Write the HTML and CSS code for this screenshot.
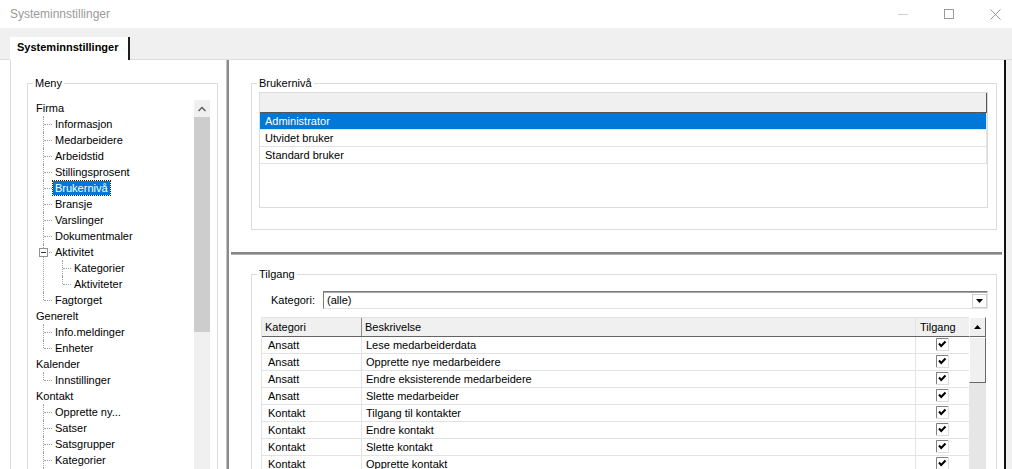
FILE: index.html
```html
<!DOCTYPE html>
<html lang="no">
<head>
    <meta charset="UTF-8">
    <title>Systeminnstillinger</title>
    <link rel="stylesheet" href="styles.css">
</head>
<body>
    <div class="titlebar">
        <span class="title">Systeminnstillinger</span>
        <div class="winctl">
            <span><svg width="10" height="10"><line x1="0" y1="5.5" x2="10" y2="5.5" stroke="#cfcfcf"/></svg></span>
            <span><svg width="10" height="10"><rect x="0.5" y="0.5" width="9" height="9" fill="none" stroke="#9a9a9a"/></svg></span>
            <span><svg width="11" height="11"><path d="M0.5 0.5L10.5 10.5M10.5 0.5L0.5 10.5" stroke="#9a9a9a"/></svg></span>
        </div>
    </div>

    <div class="tabstrip">
        <div class="tab">Systeminnstillinger</div>
    </div>

    <div class="main">
        <div class="tabpage">
            <div class="leftpane">
                <fieldset class="group menu-group">
                    <legend>Meny</legend>
                    <div class="treeview">
                        <ul class="tree">
                            <li>Firma
                                <ul class="kids">
                                    <li>Informasjon</li>
                                    <li>Medarbeidere</li>
                                    <li>Arbeidstid</li>
                                    <li>Stillingsprosent</li>
                                    <li><span class="sel">Brukernivå</span></li>
                                    <li>Bransje</li>
                                    <li>Varslinger</li>
                                    <li>Dokumentmaler</li>
                                    <li class="open"><span class="toggle"></span>Aktivitet
                                        <ul class="kids">
                                            <li>Kategorier</li>
                                            <li>Aktiviteter</li>
                                        </ul>
                                    </li>
                                    <li>Fagtorget</li>
                                </ul>
                            </li>
                            <li>Generelt
                                <ul class="kids">
                                    <li>Info.meldinger</li>
                                    <li>Enheter</li>
                                </ul>
                            </li>
                            <li>Kalender
                                <ul class="kids">
                                    <li>Innstillinger</li>
                                </ul>
                            </li>
                            <li>Kontakt
                                <ul class="kids">
                                    <li>Opprette ny...</li>
                                    <li>Satser</li>
                                    <li>Satsgrupper</li>
                                    <li>Kategorier</li>
                                    <li>Maler</li>
                                </ul>
                            </li>
                        </ul>
                        <div class="tree-scroll">
                            <div class="sb-up"><svg width="8" height="6"><polyline points="0.5,5 4,1.5 7.5,5" fill="none" stroke="#606060" stroke-width="1.5"/></svg></div>
                            <div class="sb-thumb"></div>
                        </div>
                    </div>
                </fieldset>
            </div>

            <div class="vsplit"></div>

            <div class="rightpane">
                <div class="top-pane">
                    <fieldset class="group level-group">
                        <legend>Brukernivå</legend>
                        <div class="listview">
                            <div class="lv-head"></div>
                            <div class="lv-row selected">Administrator</div>
                            <div class="lv-row">Utvidet bruker</div>
                            <div class="lv-row">Standard bruker</div>
                        </div>
                    </fieldset>
                </div>

                <div class="hsplit"></div>

                <div class="bottom-pane">
                    <fieldset class="group access-group">
                        <legend>Tilgang</legend>
                        <div class="filter-row">
                            <label class="filter-label">Kategori:</label>
                            <div class="combo">
                                <span class="combo-text">(alle)</span>
                                <span class="combo-btn"><svg width="7" height="4"><polygon points="0,0 7,0 3.5,4" fill="#000"/></svg></span>
                            </div>
                        </div>

                        <div class="grid">
                            <div class="grid-body">
                                <div class="gh">
                                    <div class="hc c1">Kategori</div>
                                    <div class="hc c2">Beskrivelse</div>
                                    <div class="hc c3">Tilgang</div>
                                </div>
                                <div class="gr"><div class="c1">Ansatt</div><div class="c2">Lese medarbeiderdata</div><div class="c3"><svg class="chk" width="13" height="13"><rect x="0.5" y="0.5" width="12" height="12" fill="#fff" stroke="#dcdcdc"/><path d="M0.5 12V0.5H12" fill="none" stroke="#808080"/><polyline points="3,5.5 5.2,8 9.5,3.5" fill="none" stroke="#000" stroke-width="2"/></svg></div></div>
                                <div class="gr"><div class="c1">Ansatt</div><div class="c2">Opprette nye medarbeidere</div><div class="c3"><svg class="chk" width="13" height="13"><rect x="0.5" y="0.5" width="12" height="12" fill="#fff" stroke="#dcdcdc"/><path d="M0.5 12V0.5H12" fill="none" stroke="#808080"/><polyline points="3,5.5 5.2,8 9.5,3.5" fill="none" stroke="#000" stroke-width="2"/></svg></div></div>
                                <div class="gr"><div class="c1">Ansatt</div><div class="c2">Endre eksisterende medarbeidere</div><div class="c3"><svg class="chk" width="13" height="13"><rect x="0.5" y="0.5" width="12" height="12" fill="#fff" stroke="#dcdcdc"/><path d="M0.5 12V0.5H12" fill="none" stroke="#808080"/><polyline points="3,5.5 5.2,8 9.5,3.5" fill="none" stroke="#000" stroke-width="2"/></svg></div></div>
                                <div class="gr"><div class="c1">Ansatt</div><div class="c2">Slette medarbeider</div><div class="c3"><svg class="chk" width="13" height="13"><rect x="0.5" y="0.5" width="12" height="12" fill="#fff" stroke="#dcdcdc"/><path d="M0.5 12V0.5H12" fill="none" stroke="#808080"/><polyline points="3,5.5 5.2,8 9.5,3.5" fill="none" stroke="#000" stroke-width="2"/></svg></div></div>
                                <div class="gr"><div class="c1">Kontakt</div><div class="c2">Tilgang til kontakter</div><div class="c3"><svg class="chk" width="13" height="13"><rect x="0.5" y="0.5" width="12" height="12" fill="#fff" stroke="#dcdcdc"/><path d="M0.5 12V0.5H12" fill="none" stroke="#808080"/><polyline points="3,5.5 5.2,8 9.5,3.5" fill="none" stroke="#000" stroke-width="2"/></svg></div></div>
                                <div class="gr"><div class="c1">Kontakt</div><div class="c2">Endre kontakt</div><div class="c3"><svg class="chk" width="13" height="13"><rect x="0.5" y="0.5" width="12" height="12" fill="#fff" stroke="#dcdcdc"/><path d="M0.5 12V0.5H12" fill="none" stroke="#808080"/><polyline points="3,5.5 5.2,8 9.5,3.5" fill="none" stroke="#000" stroke-width="2"/></svg></div></div>
                                <div class="gr"><div class="c1">Kontakt</div><div class="c2">Slette kontakt</div><div class="c3"><svg class="chk" width="13" height="13"><rect x="0.5" y="0.5" width="12" height="12" fill="#fff" stroke="#dcdcdc"/><path d="M0.5 12V0.5H12" fill="none" stroke="#808080"/><polyline points="3,5.5 5.2,8 9.5,3.5" fill="none" stroke="#000" stroke-width="2"/></svg></div></div>
                                <div class="gr"><div class="c1">Kontakt</div><div class="c2">Opprette kontakt</div><div class="c3"><svg class="chk" width="13" height="13"><rect x="0.5" y="0.5" width="12" height="12" fill="#fff" stroke="#dcdcdc"/><path d="M0.5 12V0.5H12" fill="none" stroke="#808080"/><polyline points="3,5.5 5.2,8 9.5,3.5" fill="none" stroke="#000" stroke-width="2"/></svg></div></div>
                            </div>
                            <div class="vscroll">
                                <div class="vs-up"><svg width="7" height="4"><polygon points="0,4 7,4 3.5,0" fill="#000"/></svg></div>
                                <div class="vs-thumb"></div>
                            </div>
                        </div>
                    </fieldset>
                </div>
            </div>
        </div>
        <div class="frame-edge"></div>
    </div>
</body>
</html>
```

FILE: styles.css
```css
body {
    margin: 0;
    width: 1012px;
    height: 469px;
    overflow: hidden;
    background-color: #f0f0f0;
    font-family: "Liberation Sans", Arial, sans-serif;
    font-size: 11px;
    color: #000;
}

/* window title */
.titlebar {
    height: 28px;
    background-color: #fff;
    display: flex;
    align-items: center;
    justify-content: space-between;
}

.title {
    padding-left: 10px;
    font-size: 12px;
    color: #9a9a9a;
}

.winctl {
    display: flex;
    margin-right: -6px;
}

.winctl span {
    width: 46px;
    height: 28px;
    display: flex;
    align-items: center;
    justify-content: center;
}

/* tabs */
.tabstrip {
    height: 31px;
    display: flex;
    align-items: flex-end;
    padding-left: 10px;
}

.tab {
    position: relative;
    z-index: 1;
    width: 120px;
    height: 23px;
    margin-bottom: -1px;
    box-sizing: border-box;
    padding-left: 7px;
    background-color: #fff;
    border-right: 2px solid #1e1e1e;
    font-weight: bold;
    line-height: 20px;
}

.main {
    height: 410px;
    display: flex;
    background-color: #fff;
    border-top: 1px solid #dcdcdc;
    box-sizing: border-box;
}

.tabpage {
    flex: 1;
    display: flex;
    margin-left: 10px;
    border-left: 1px solid #dcdcdc;
}

.frame-edge {
    width: 6px;
    border-left: 2px solid #111;
    background-color: #f0f0f0;
}

/* group boxes */
fieldset.group {
    margin: 0;
    min-width: 0;
    border: 1px solid #dcdcdc;
}

fieldset.group legend {
    padding: 0 2px;
    line-height: 13px;
}

/* left menu */
.leftpane {
    width: 215px;
    padding: 17px 8px 0 16px;
    box-sizing: border-box;
    overflow: hidden;
}

.menu-group {
    height: 420px;
    padding: 0 7px 0 8px;
}

.menu-group legend {
    margin-left: -3px;
}

.treeview {
    display: flex;
    margin-top: 9px;
    height: 380px;
    overflow: hidden;
}

.tree {
    flex: 1;
    margin: 1px 0 0;
    padding: 0;
    list-style: none;
}

.tree ul {
    margin: 0;
    padding: 0 0 0 19px;
    list-style: none;
}

.tree li {
    line-height: 16px;
    white-space: nowrap;
}

.kids > li {
    position: relative;
}

.kids > li::before {
    content: "";
    position: absolute;
    left: -12px;
    top: 0;
    bottom: 0;
    border-left: 1px dotted #a0a0a0;
}

.kids > li:last-child::before {
    bottom: auto;
    height: 8px;
}

.kids > li::after {
    content: "";
    position: absolute;
    left: -11px;
    top: 8px;
    width: 8px;
    border-top: 1px dotted #a0a0a0;
}

.toggle {
    position: absolute;
    z-index: 1;
    left: -16px;
    top: 4px;
    width: 9px;
    height: 9px;
    box-sizing: border-box;
    border: 1px solid #919191;
    background-color: #fff;
}

.toggle::after {
    content: "";
    position: absolute;
    left: 1px;
    top: 3px;
    width: 5px;
    border-top: 1px solid #333;
}

.sel {
    display: inline-block;
    margin-left: -2px;
    padding: 0 2px;
    line-height: 14px;
    background-color: #0078d7;
    color: #fff;
    outline: 1px dotted #222;
}

.tree-scroll {
    width: 16px;
    margin-top: 1px;
    background-color: #f0f0f0;
}

.sb-up {
    height: 17px;
    display: flex;
    align-items: center;
    justify-content: center;
}

.sb-thumb {
    height: 215px;
    background-color: #cdcdcd;
}

/* splitters */
.vsplit {
    width: 3px;
    background-color: #8a8a8a;
    border-left: 1px solid #c4c4c4;
    box-sizing: border-box;
}

.hsplit {
    height: 3px;
    margin: 0 2px;
    background-color: #858585;
    border-bottom: 1px solid #b0b0b0;
    box-sizing: border-box;
}

.rightpane {
    width: 775px;
    display: flex;
    flex-direction: column;
}

/* Brukernivå */
.top-pane {
    height: 192px;
    padding: 17px 7px 0 22px;
    box-sizing: border-box;
}

.level-group {
    padding: 0 8px 21px 7px;
}

.level-group legend {
    margin-left: -2px;
}

.listview {
    margin-top: 2px;
    height: 116px;
    box-sizing: border-box;
    border: 1px solid #dcdcdc;
}

.lv-head {
    height: 20px;
    box-sizing: border-box;
    background-color: #f0f0f0;
    border-bottom: 1px solid #555;
    border-right: 1px solid #555;
}

.lv-row {
    height: 17px;
    box-sizing: border-box;
    padding-left: 5px;
    line-height: 16px;
    border-bottom: 1px solid #e3e3e3;
    border-right: 1px solid #e3e3e3;
}

.lv-row.selected {
    background-color: #0078d7;
    color: #fff;
}

/* Tilgang */
.bottom-pane {
    flex: 1;
    padding: 13px 7px 0 22px;
    overflow: hidden;
}

.access-group {
    height: 300px;
    padding: 0 8px 0 9px;
}

.access-group legend {
    margin-left: -4px;
}

.filter-row {
    display: flex;
    align-items: center;
    margin-top: 10px;
    height: 18px;
}

.filter-label {
    width: 52px;
    margin-left: 10px;
}

.combo {
    flex: 1;
    height: 18px;
    box-sizing: border-box;
    display: flex;
    align-items: center;
    justify-content: space-between;
    border: 1px solid;
    border-color: #7a7a7a #e3e3e3 #e3e3e3 #7a7a7a;
    box-shadow: inset 0 1px 0 #a8a8a8;
}

.combo-text {
    padding-left: 3px;
}

.combo-btn {
    width: 15px;
    height: 14px;
    margin-top: 1px;
    box-sizing: border-box;
    border: 1px solid #cfcfcf;
    background-color: #fdfdfd;
    display: flex;
    align-items: center;
    justify-content: center;
}

.grid {
    display: flex;
    margin-top: 8px;
    border-left: 1px solid #e3e3e3;
}

.grid-body {
    width: 707px;
}

.gh, .gr {
    display: grid;
    grid-template-columns: 100px 554px 53px;
}

.gh {
    height: 20px;
    box-sizing: border-box;
    background-color: #f0f0f0;
    border-top: 1px solid #e3e3e3;
    border-bottom: 1px solid #646464;
    line-height: 18px;
}

.hc {
    padding-left: 3px;
}

.hc.c1 {
    border-right: 1px solid #8c8c8c;
}

.hc.c2 {
    border-right: 1px solid #e3e3e3;
}

.hc.c3 {
    padding-left: 4px;
}

.gr {
    height: 17px;
    box-sizing: border-box;
    border-bottom: 1px solid #e3e3e3;
    line-height: 16px;
}

.gr .c1 {
    padding-left: 6px;
    border-right: 1px solid #e3e3e3;
}

.gr .c2 {
    padding-left: 4px;
    border-right: 1px solid #e3e3e3;
}

.gr .c3 {
    display: flex;
    justify-content: center;
}

.chk {
    margin-top: 1px;
}

.vscroll {
    width: 17px;
    background-color: #e6e6e6;
}

.vs-up, .vs-thumb {
    box-sizing: border-box;
    background-color: #f0f0f0;
    border: 1px solid;
    border-color: #fff #696969 #696969 #fff;
}

.vs-up {
    height: 20px;
    display: flex;
    align-items: center;
    justify-content: center;
}

.vs-thumb {
    height: 46px;
}
```
